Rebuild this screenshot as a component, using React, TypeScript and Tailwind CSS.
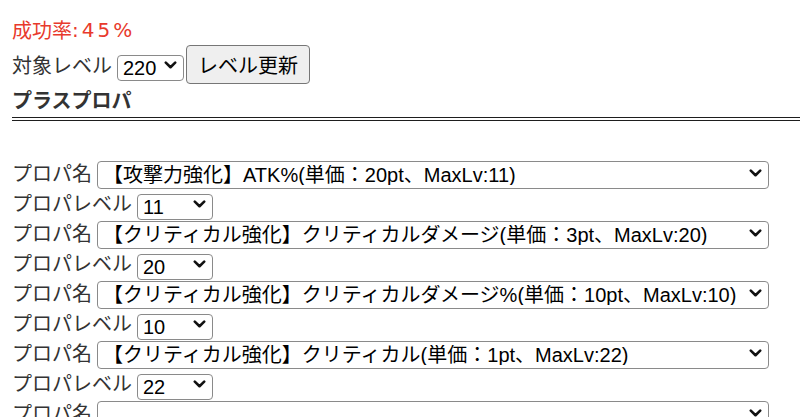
import React from "react";

const CJK = "font-['Noto_Sans_CJK_JP',sans-serif]";
const SEL = "font-['Liberation_Sans','Noto_Sans_CJK_JP',sans-serif]";

interface PropRow {
  name: string;
  level: string;
}

const rows: PropRow[] = [
  { name: "【攻撃力強化】ATK%(単価：20pt、MaxLv:11)", level: "11" },
  { name: "【クリティカル強化】クリティカルダメージ(単価：3pt、MaxLv:20)", level: "20" },
  { name: "【クリティカル強化】クリティカルダメージ%(単価：10pt、MaxLv:10)", level: "10" },
  { name: "【クリティカル強化】クリティカル(単価：1pt、MaxLv:22)", level: "22" },
  { name: "", level: "" },
];

function Chevron() {
  return (
    <svg
      width="13"
      height="8"
      viewBox="0 0 13 8"
      className="pointer-events-none absolute right-[7px] top-1/2 -translate-y-1/2"
    >
      <polyline
        points="1.8,1.6 6.5,6.2 11.2,1.6"
        fill="none"
        stroke="#111"
        strokeWidth="2.6"
        strokeLinecap="round"
        strokeLinejoin="round"
      />
    </svg>
  );
}

// select drawn like the mac chrome default
function Select({
  value,
  options,
  className,
}: {
  value: string;
  options: string[];
  className: string;
}) {
  return (
    <div className={`relative ${className}`}>
      <select
        defaultValue={value}
        className={`h-full w-full appearance-none rounded-[4px] border border-[#8a8a8a] bg-white pl-[5px] pr-[24px] text-[20px] leading-none text-black outline-none ${SEL}`}
      >
        {options.map((o) => (
          <option key={o} value={o}>
            {o}
          </option>
        ))}
      </select>
      <Chevron />
    </div>
  );
}

export default function App() {
  return (
    <div className={`h-[417px] w-[800px] overflow-hidden bg-white pt-[15px] pl-[12px] text-[20px] text-[#333] ${CJK}`}>
      <div className="flex h-[30px] items-center text-[#e8392c]">
        成功率
        <span className="font-['DejaVu_Sans',sans-serif] tracking-[3px]">:45%</span>
      </div>

      <div className="flex h-[39px] items-center">
        <span>対象レベル</span>
        <Select value="220" options={["200", "210", "220", "230"]} className="ml-[5px] h-[26px] w-[67px]" />
        <button className="ml-[2px] h-[39px] w-[124px] rounded-[4px] border border-[#767676] bg-[#efefef] text-[20px] text-black">
          レベル更新
        </button>
      </div>

      <div className="flex h-[32px] items-center font-bold">プラスプロパ</div>

      {/* double rule */}
      <div className="mt-px">
        <div className="h-px bg-[#1e1e1e]" />
        <div className="mt-[2px] h-px bg-[#1e1e1e]" />
      </div>

      <div className="mt-[37px]">
        {rows.map((r, i) => (
          <div key={i}>
            <div className="flex h-[30px] items-center">
              <span>プロパ名</span>
              <Select value={r.name} options={[r.name]} className="ml-[5px] h-[28px] w-[672px]" />
            </div>
            <div className="flex h-[30px] items-center">
              <span>プロパレベル</span>
              <Select
                value={r.level}
                options={[r.level]}
                className="ml-[5px] mt-[2px] h-[26px] w-[76px]"
              />
            </div>
          </div>
        ))}
      </div>
    </div>
  );
}
